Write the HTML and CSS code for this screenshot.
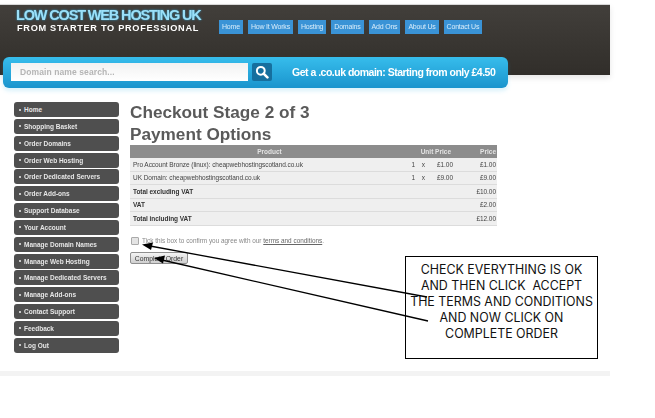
FILE: index.html
```html
<!DOCTYPE html>
<html lang="en">
<head>
  <meta charset="UTF-8" />
  <title>Checkout Stage 2 of 3</title>
  <link rel="stylesheet" href="styles.css">
</head>
<body>
  <div class="page">
    <div class="site">
      <div class="header">
        <div class="logo">
          <div class="logo-title">LOW COST WEB HOSTING UK</div>
          <div class="logo-sub">FROM STARTER TO PROFESSIONAL</div>
        </div>
        <ul class="nav">
          <li>Home</li>
          <li>How It Works</li>
          <li>Hosting</li>
          <li>Domains</li>
          <li>Add Ons</li>
          <li>About Us</li>
          <li>Contact Us</li>
        </ul>
      </div>

      <div class="search-bar">
        <div class="search-input">Domain name search...</div>
        <div class="search-btn">
          <svg width="14" height="14" viewBox="0 0 14 14">
            <circle cx="5.8" cy="5.8" r="3.9" fill="none" stroke="#fff" stroke-width="2"/>
            <path d="M8.6 8.6 L12.4 12.4" stroke="#fff" stroke-width="2.6" stroke-linecap="round"/>
          </svg>
        </div>
        <div class="search-promo">Get a .co.uk domain: Starting from only £4.50</div>
      </div>

      <div class="content">
        <ul class="side-menu">
          <li>Home</li>
          <li>Shopping Basket</li>
          <li>Order Domains</li>
          <li>Order Web Hosting</li>
          <li>Order Dedicated Servers</li>
          <li>Order Add-ons</li>
          <li>Support Database</li>
          <li>Your Account</li>
          <li>Manage Domain Names</li>
          <li>Manage Web Hosting</li>
          <li>Manage Dedicated Servers</li>
          <li>Manage Add-ons</li>
          <li>Contact Support</li>
          <li>Feedback</li>
          <li>Log Out</li>
        </ul>

        <div class="main">
          <h1>Checkout Stage 2 of 3<br>Payment Options</h1>
          <table class="order">
            <colgroup>
              <col class="col-product">
              <col class="col-qty">
              <col class="col-x">
              <col class="col-unit">
              <col>
            </colgroup>
            <tr>
              <th>Product</th>
              <th class="unit-head" colspan="3">Unit Price</th>
              <th class="price">Price</th>
            </tr>
            <tr>
              <td>Pro Account Bronze (linux): cheapwebhostingscotland.co.uk</td>
              <td class="num">1</td>
              <td class="num">x</td>
              <td class="num">£1.00</td>
              <td class="price">£1.00</td>
            </tr>
            <tr>
              <td>UK Domain: cheapwebhostingscotland.co.uk</td>
              <td class="num">1</td>
              <td class="num">x</td>
              <td class="num">£9.00</td>
              <td class="price">£9.00</td>
            </tr>
            <tr>
              <td class="total" colspan="4">Total excluding VAT</td>
              <td class="price">£10.00</td>
            </tr>
            <tr>
              <td class="total" colspan="4">VAT</td>
              <td class="price">£2.00</td>
            </tr>
            <tr>
              <td class="total" colspan="4">Total including VAT</td>
              <td class="price">£12.00</td>
            </tr>
          </table>

          <div class="agree">
            <span class="tick"></span>
            <span>Tick this box to confirm you agree with our <u>terms and conditions</u>.</span>
          </div>
          <div class="complete-btn">Complete Order</div>
        </div>
      </div>

      <div class="footer-band"></div>
    </div>

    <!-- annotation pasted over the screenshot -->
    <div class="note">
      <div>CHECK EVERYTHING IS OK</div>
      <div>AND THEN CLICK&nbsp; ACCEPT</div>
      <div>THE TERMS AND CONDITIONS</div>
      <div>AND NOW CLICK ON</div>
      <div>COMPLETE ORDER</div>
    </div>
    <svg class="arrows" width="655" height="418" viewBox="0 0 655 418">
      <path d="M427 297 L150 246" stroke="#000" stroke-width="1.3"/>
      <path d="M142 244.5 L153 242.5 L151 250 Z" fill="#000"/>
      <path d="M428 321 L162 260" stroke="#000" stroke-width="1.3"/>
      <path d="M154 258 L165 255.5 L163 263.5 Z" fill="#000"/>
    </svg>
  </div>
</body>
</html>
```

FILE: styles.css
```css
body {
  margin: 0;
  background: #fff;
  font-family: "Liberation Sans", Arial, sans-serif;
}

ul {
  margin: 0;
  padding: 0;
  list-style: none;
}

.page {
  position: relative;
  width: 655px;
  height: 418px;
  overflow: hidden;
}

.site {
  width: 610px;
  padding-top: 4px;
  filter: blur(0.35px);
}

/* header */
.header {
  height: 71px;
  box-sizing: border-box;
  display: flex;
  background: linear-gradient(#423f3b, #312e2a);
  border-top: 1px solid #d8d8d8;
  box-shadow: 0 3px 6px rgba(0, 0, 0, 0.1);
}

.logo {
  width: 203px;
  padding: 2px 0 0 16px;
  flex-shrink: 0;
  box-sizing: border-box;
}

.logo-title {
  font-size: 14.5px;
  line-height: 16px;
  font-weight: bold;
  letter-spacing: -1.15px;
  white-space: nowrap;
  color: #9ce0f8;
  text-shadow: 0 0 2px #2fa9dc;
}

.logo-sub {
  padding-left: 1px;
  font-size: 9.2px;
  line-height: 11px;
  font-weight: bold;
  letter-spacing: 0.7px;
  white-space: nowrap;
  color: #fff;
}

.nav {
  display: flex;
  gap: 5px;
  margin: 15px 0 0 16px;
}

.nav li {
  height: 14px;
  line-height: 14px;
  padding: 0 3px;
  background: #3a93d6;
  color: #d8ecfa;
  font-size: 7px;
  letter-spacing: -0.2px;
  white-space: nowrap;
}

/* search */
.search-bar {
  position: relative;
  width: 505px;
  height: 31px;
  margin: -18px 0 0 3px;
  display: flex;
  align-items: center;
  box-sizing: border-box;
  padding: 0 0 1px 8px;
  border-radius: 6px;
  background: linear-gradient(#37bdec, #1a94cd);
  box-shadow: 0 3px 4px rgba(70, 190, 235, 0.2);
}

.search-input {
  width: 237px;
  height: 18px;
  line-height: 18px;
  box-sizing: border-box;
  padding-left: 9px;
  background: linear-gradient(#f2f2f2, #fff);
  color: #b5b5b5;
  font-size: 8.5px;
  font-weight: bold;
  letter-spacing: 0.1px;
}

.search-btn {
  width: 20px;
  height: 18px;
  margin-left: 4px;
  display: flex;
  align-items: center;
  justify-content: center;
  border-radius: 2px;
  background: #166f9e;
}

.search-promo {
  margin-left: 20px;
  color: #fff;
  font-size: 10.5px;
  font-weight: bold;
  letter-spacing: -0.5px;
  white-space: nowrap;
}

/* main area */
.content {
  display: flex;
  margin-top: 14px;
  padding-left: 14px;
}

.side-menu {
  width: 105px;
  flex-shrink: 0;
  display: flex;
  flex-direction: column;
  gap: 1.85px;
}

.side-menu li {
  height: 15px;
  line-height: 15px;
  padding-left: 10px;
  position: relative;
  border-radius: 3px;
  background: #4f4f4f;
  color: #e6e6e6;
  font-size: 6.5px;
  font-weight: bold;
  white-space: nowrap;
}

.side-menu li::before {
  content: "";
  position: absolute;
  left: 5px;
  top: 6.5px;
  width: 2px;
  height: 2px;
  border-radius: 50%;
  background: #eee;
}

.main {
  margin-left: 11px;
  width: 367px;
}

h1 {
  margin: 0;
  font-size: 17.2px;
  line-height: 21.5px;
  color: #5a5a5a;
}

.order {
  width: 367px;
  border-collapse: collapse;
  table-layout: fixed;
  font-size: 6.5px;
  color: #444;
}

.col-product {
  width: 279px;
}

.col-qty {
  width: 6px;
}

.col-x {
  width: 10px;
}

.col-unit {
  width: 28px;
}

.order th {
  height: 13px;
  padding: 0;
  background: #8c8c8c;
  color: #e4e4e4;
  font-weight: bold;
  white-space: nowrap;
}

.order td {
  height: 12.5px;
  padding: 0;
  background: #efefef;
  border-bottom: 1px solid #dcdcdc;
  white-space: nowrap;
  letter-spacing: -0.05px;
}

.order td:first-child {
  padding-left: 3px;
}

.order .total {
  font-weight: bold;
  color: #333;
}

.order .num {
  padding: 0;
  text-align: right;
}

.order .unit-head {
  text-align: right;
  padding-right: 2px;
}

.order .price {
  text-align: right;
  padding-right: 1px;
}

.agree {
  display: flex;
  align-items: center;
  gap: 3px;
  margin-top: 10.5px;
  padding-left: 1px;
  font-size: 6.4px;
  line-height: 9px;
  color: #888;
  white-space: nowrap;
}

.agree u {
  color: #666;
}

.tick {
  width: 6px;
  height: 6px;
  border: 1px solid #aaa;
  border-radius: 1px;
  background: #e4e4e4;
}

.complete-btn {
  width: 58px;
  height: 12.5px;
  margin-top: 6.5px;
  line-height: 11.5px;
  box-sizing: border-box;
  text-align: center;
  border: 1px solid #8f8f8f;
  border-radius: 2px;
  background: linear-gradient(#f4f4f4, #cfcfcf);
  color: #333;
  font-size: 6.8px;
}

.footer-band {
  height: 5px;
  margin-top: 18px;
  background: #f3f3f3;
}

/* annotation overlay */
.arrows {
  position: absolute;
  left: 0;
  top: 0;
}

.note {
  position: absolute;
  left: 405px;
  top: 256px;
  width: 193px;
  height: 103px;
  box-sizing: border-box;
  padding-top: 5px;
  border: 1px solid #000;
  background: #fff;
  color: #111;
  font-family: Inter, "DejaVu Sans", sans-serif;
  font-size: 12.4px;
  line-height: 16px;
  text-align: center;
  white-space: nowrap;
}
```
